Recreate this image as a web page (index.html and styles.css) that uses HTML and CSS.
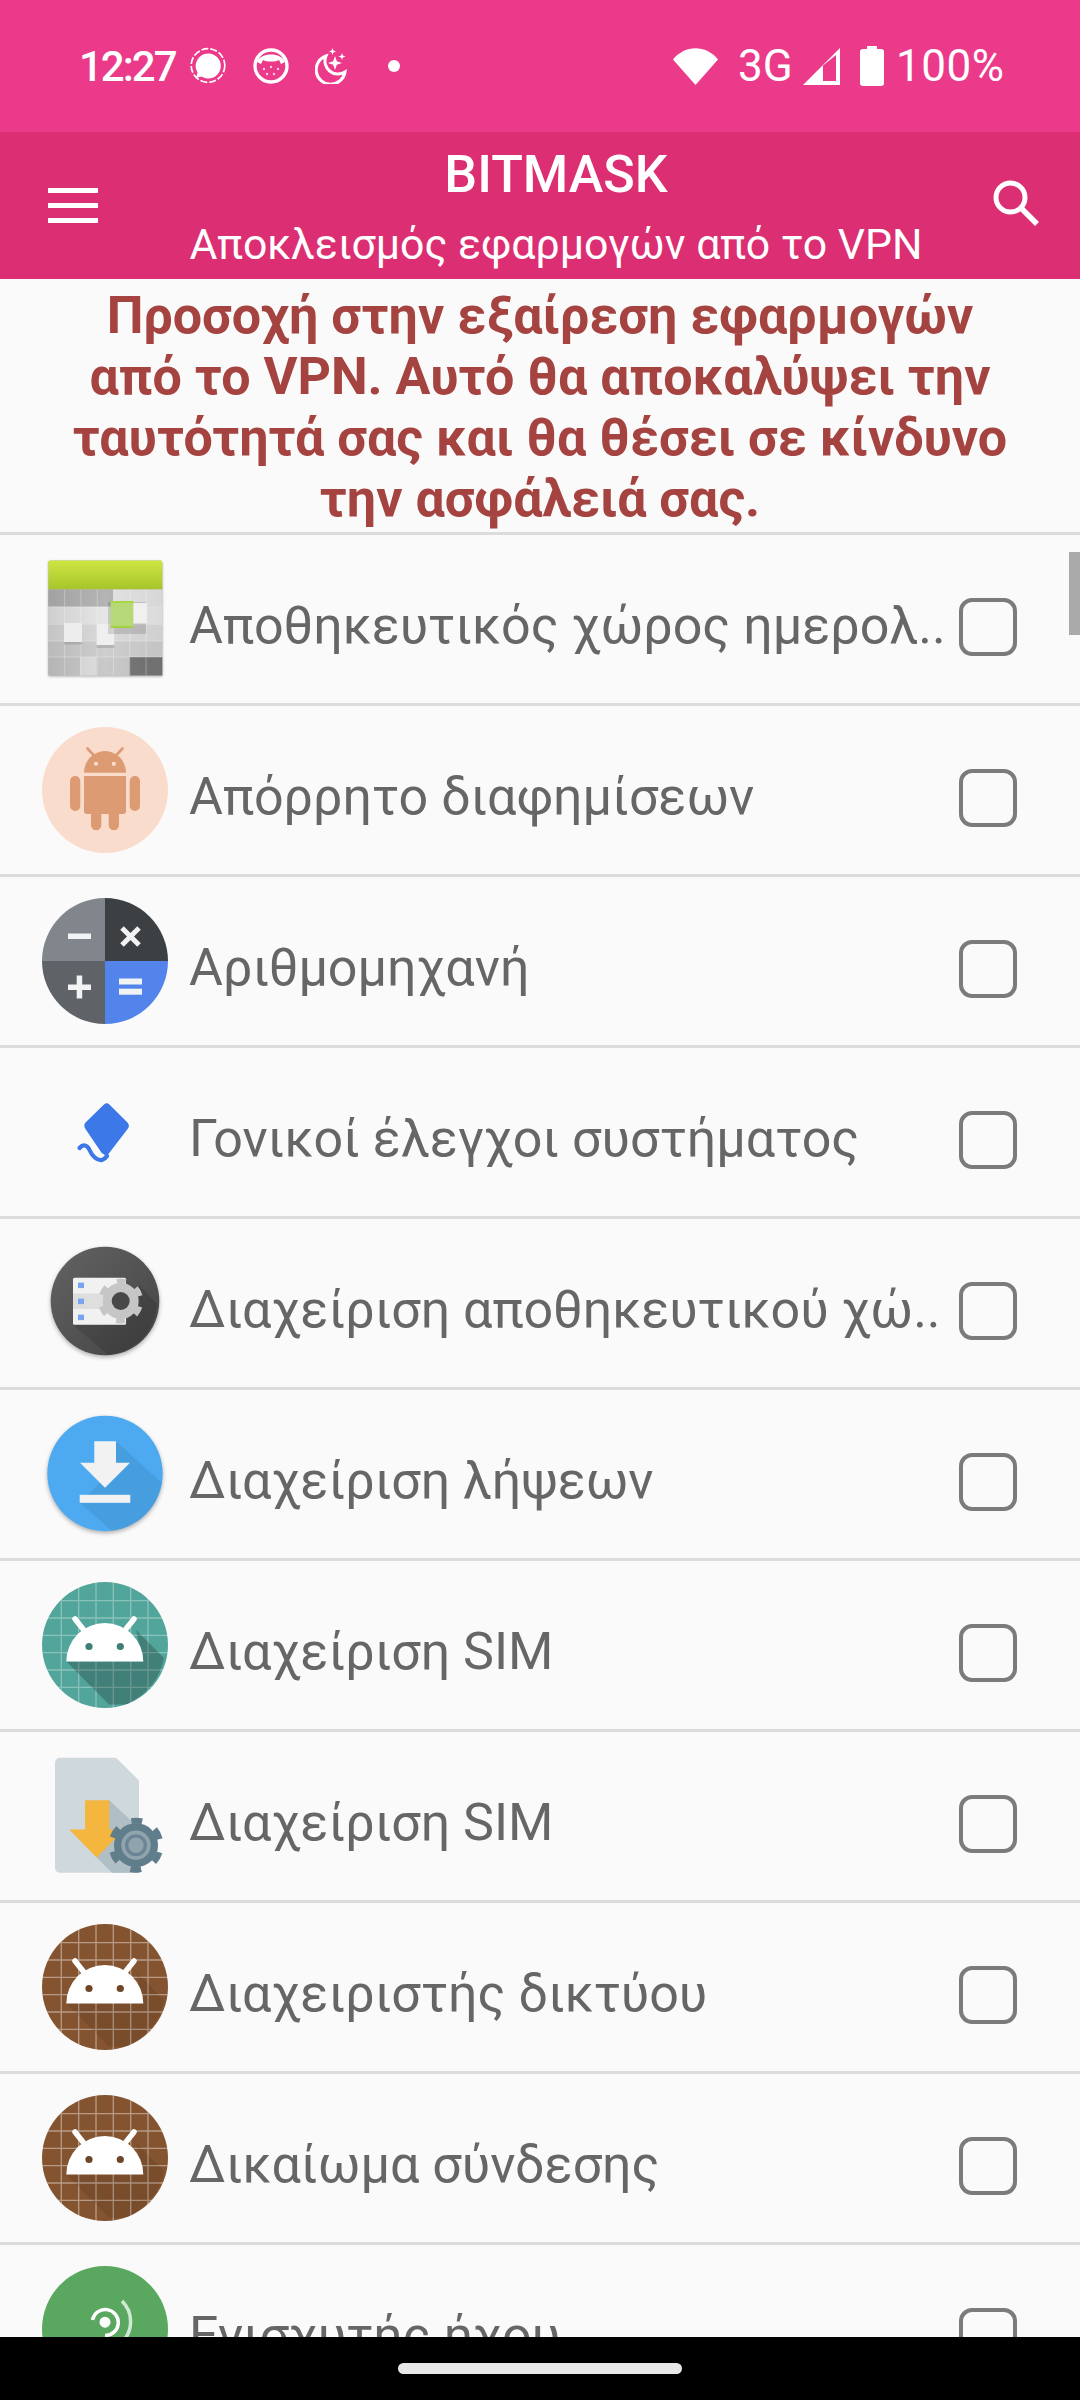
FILE: index.html
```html
<!DOCTYPE html>
<html lang="el">
<head>
    <meta charset="UTF-8">
    <meta name="viewport" content="width=device-width, initial-scale=1.0">
    <title>Bitmask</title>
    <link rel="stylesheet" href="styles.css">
</head>
<body>

<svg class="defs" width="0" height="0">
    <symbol id="droid" viewBox="0 0 126 126">
        <path class="droid-shade" d="M24.3 79.5H101.3L94 48L122 76A63 63 0 0 1 84 122.5H67Z" fill="#000"/>
        <path d="M24.3 79.5A38.5 38.5 0 0 1 101.3 79.5Z" fill="#fff"/>
        <path d="M33 37L41 47M92 37L84 47" stroke="#fff" stroke-width="5.5" stroke-linecap="round"/>
        <circle cx="47" cy="64.5" r="3.6" fill="currentColor"/>
        <circle cx="78.3" cy="64.5" r="3.6" fill="currentColor"/>
    </symbol>
    <symbol id="grid" viewBox="0 0 126 126">
        <path class="grid-lines" d="M19.3 0V126M36.7 0V126M54 0V126M71.3 0V126M88.7 0V126M106 0V126M0 18.7H126M0 36H126M0 53.3H126M0 70.7H126M0 88H126M0 105.3H126" stroke="#fff" stroke-width="1.3"/>
    </symbol>
</svg>

<div class="page">
    <div class="statusbar">
        <span class="clock">12:27</span>
        <svg class="st-signal" viewBox="0 0 36 38">
            <circle cx="18" cy="18.5" r="16.8" fill="none" stroke="#fff" stroke-width="1.7" stroke-dasharray="7 2"/>
            <path d="M18 6.5A12.5 12.5 0 1 1 11.5 29.5L6 31L7.5 25.5A12.5 12.5 0 0 1 18 6.5Z" fill="#fff"/>
        </svg>
        <svg class="st-cat" viewBox="0 0 36 36">
            <circle cx="18" cy="18" r="16" fill="none" stroke="#fff" stroke-width="3.4"/>
            <path d="M4 14C7 4 29 4 32 14L28 16L26 12C22 14 14 14 10 12L8 16Z" fill="#fff"/>
            <g fill="#fff" opacity="0.75">
                <circle cx="11" cy="21" r="1.2"/><circle cx="18" cy="19" r="1.2"/><circle cx="25" cy="21" r="1.2"/>
                <circle cx="14" cy="26" r="1.2"/><circle cx="21" cy="26" r="1.2"/>
            </g>
        </svg>
        <svg class="st-moon" viewBox="0 0 32 36">
            <path d="M11 8A14.5 14.5 0 1 0 30 24A13 13 0 0 1 11 8Z" fill="none" stroke="#fff" stroke-width="3"/>
            <path d="M20 8L21.8 13.2L27 15L21.8 16.8L20 22L18.2 16.8L13 15L18.2 13.2Z" fill="#fff"/>
            <path d="M17.5 0L18.4 2.6L21 3.5L18.4 4.4L17.5 7L16.6 4.4L14 3.5L16.6 2.6Z" fill="#fff"/>
            <path d="M27 5L27.9 7.6L30.5 8.5L27.9 9.4L27 12L26.1 9.4L23.5 8.5L26.1 7.6Z" fill="#fff"/>
        </svg>
        <span class="st-dot"></span>
        <svg class="st-wifi" viewBox="0 0 45 37">
            <path d="M0 11.5C12 -3.5 33 -3.5 45 11.5L22.5 37Z" fill="#fff"/>
        </svg>
        <span class="st-net">3G</span>
        <svg class="st-bars" viewBox="0 0 37 37">
            <path d="M0 37L37 0V37Z" fill="#fff"/>
            <path d="M20 17.5V33H33V7Z" fill="#ec3a8a"/>
        </svg>
        <svg class="st-batt" viewBox="0 0 24 40">
            <path d="M7 0H17V3H21A3 3 0 0 1 24 6V37A3 3 0 0 1 21 40H3A3 3 0 0 1 0 37V6A3 3 0 0 1 3 3H7Z" fill="#fff"/>
        </svg>
        <span class="st-level">100%</span>
    </div>

    <div class="appbar">
        <div class="menu"><span></span><span></span><span></span></div>
        <div class="titles">
            <div class="title">BITMASK</div>
            <div class="subtitle">Αποκλεισμός εφαρμογών από το VPN</div>
        </div>
        <svg class="search" viewBox="0 0 48 48">
            <circle cx="18.5" cy="18.5" r="14.5" fill="none" stroke="#fff" stroke-width="5"/>
            <path d="M29 29L45 45" stroke="#fff" stroke-width="5.5"/>
        </svg>
    </div>

    <div class="content">
        <div class="notice">Προσοχή στην εξαίρεση εφαρμογών<br>από το VPN. Αυτό θα αποκαλύψει την<br>ταυτότητά σας και θα θέσει σε κίνδυνο<br>την ασφάλειά σας.</div>
        <div class="scrollthumb"></div>

        <div class="row">
            <svg class="icon icon-soft" viewBox="0 0 126 126">
                <defs>
                    <linearGradient id="calTop" x1="0" y1="0" x2="0" y2="1"><stop offset="0" stop-color="#cfe542"/><stop offset="1" stop-color="#a6c52b"/></linearGradient>
                    <linearGradient id="calShade" x1="0" y1="0" x2="1" y2="0"><stop offset="0" stop-color="#000" stop-opacity="0.1"/><stop offset="0.5" stop-color="#000" stop-opacity="0"/><stop offset="1" stop-color="#000" stop-opacity="0.05"/></linearGradient>
                </defs>
                <rect x="6.3" y="4.5" width="114" height="115" rx="2" fill="#bdbdbd"/>
                <path d="M6.3 6.5a2 2 0 0 1 2-2H118.3a2 2 0 0 1 2 2V33.5H6.3Z" fill="url(#calTop)"/>
                <rect x="6.3" y="33.5" width="65" height="17.3" fill="#b4b4b4"/>
                <rect x="71.3" y="33.5" width="49" height="17.3" fill="#e2e2e2"/>
                <rect x="6.3" y="50.8" width="114" height="17.7" fill="#e6e6e6"/>
                <rect x="6.3" y="68.5" width="114" height="16.5" fill="#dadada"/>
                <rect x="6.3" y="85" width="114" height="16" fill="#cecece"/>
                <rect x="6.3" y="101" width="114" height="18.5" fill="#c9c9c9"/>
                <rect x="38" y="101" width="16.5" height="18.5" fill="#dedede"/>
                <rect x="87.5" y="101" width="32.8" height="18.5" fill="#767676"/>
                <rect x="6.3" y="33.5" width="114" height="86" fill="url(#calShade)"/>
                <path d="M22.6 33.5V119.5M38.9 33.5V119.5M55.2 33.5V119.5M71.5 33.5V119.5M87.8 33.5V119.5M104.1 33.5V119.5M6.3 50.8H120.3M6.3 68.5H120.3M6.3 85H120.3M6.3 101H120.3" stroke="#fff" stroke-width="0.8" opacity="0.35"/>
                <rect x="22" y="68.5" width="18" height="20" fill="#000" opacity="0.12"/>
                <rect x="22" y="67" width="18" height="19" fill="#ededed"/>
                <rect x="54.5" y="69" width="18" height="23" fill="#000" opacity="0.12"/>
                <rect x="54.5" y="68" width="18" height="21" fill="#efefef"/>
                <rect x="66" y="46" width="38" height="32" fill="#000" opacity="0.13"/>
                <rect x="91" y="47" width="14" height="20.5" fill="#f0f0f0"/>
                <rect x="68.7" y="45" width="22.7" height="27" rx="1" fill="#b6d877"/>
                <rect x="68.7" y="45" width="22.7" height="2" fill="#a9d645"/>
                <rect x="68.7" y="70" width="22.7" height="2" fill="#a2d23f"/>
            </svg>
            <div class="name">Αποθηκευτικός χώρος ημερολ..</div>
            <span class="check"></span>
        </div>

        <div class="row">
            <svg class="icon" viewBox="0 0 126 126">
                <circle cx="63" cy="63" r="63" fill="#fadccd"/>
                <g fill="#dc9b72">
                    <path d="M42 45.7A21 21.7 0 0 1 84 45.7Z"/>
                    <path d="M42 49H84V84A3 3 0 0 1 81 87H45A3 3 0 0 1 42 84Z"/>
                    <rect x="28" y="49" width="10.3" height="35" rx="5.1"/>
                    <rect x="87.7" y="49" width="10.3" height="35" rx="5.1"/>
                    <path d="M49 87H59.3V98A5.1 5.1 0 0 1 49 98Z"/>
                    <path d="M66.7 87H77V98A5.1 5.1 0 0 1 66.7 98Z"/>
                </g>
                <path d="M45.5 21.5L52 28.5M80.5 21.5L74 28.5" stroke="#dc9b72" stroke-width="2.6" stroke-linecap="round"/>
                <rect x="52.2" y="35" width="3.6" height="3.6" fill="#fadccd"/>
                <rect x="70" y="35" width="3.6" height="3.6" fill="#fadccd"/>
            </svg>
            <div class="name">Απόρρητο διαφημίσεων</div>
            <span class="check"></span>
        </div>

        <div class="row">
            <svg class="icon" viewBox="0 0 126 126">
                <path d="M63 63V0A63 63 0 0 0 0 63Z" fill="#80868b"/>
                <path d="M63 63V0A63 63 0 0 1 126 63Z" fill="#3c4043"/>
                <path d="M63 63H0A63 63 0 0 0 63 126Z" fill="#5f6368"/>
                <path d="M63 63H126A63 63 0 0 1 63 126Z" fill="#5384ec"/>
                <g fill="#f1f3f4">
                    <rect x="26" y="35.5" width="23" height="5.5"/>
                    <rect x="26" y="86.5" width="23" height="5.5"/>
                    <rect x="34.7" y="77.5" width="5.5" height="23"/>
                    <rect x="77" y="80.5" width="23" height="6"/>
                    <rect x="77" y="90.7" width="23" height="6"/>
                </g>
                <path d="M80 30L97 47M97 30L80 47" stroke="#f1f3f4" stroke-width="5"/>
            </svg>
            <div class="name">Αριθμομηχανή</div>
            <span class="check"></span>
        </div>

        <div class="row">
            <svg class="icon" viewBox="0 0 126 126">
                <path d="M62 35.5Q64.7 32.8 67.4 35.5L85.5 53.5Q88 56.5 86 59.5L64.7 87.2L59.7 84L43.5 60Q41 56.5 43.5 53.5Z" fill="#3c78e8"/>
                <path d="M37.5 79C41 75 45 76 47 80C50 87 55 92 60 91Q63 90 65 87" fill="none" stroke="#3c78e8" stroke-width="4.2" stroke-linecap="round"/>
            </svg>
            <div class="name">Γονικοί έλεγχοι συστήματος</div>
            <span class="check"></span>
        </div>

        <div class="row">
            <svg class="icon icon-shadow" viewBox="0 0 126 126">
                <defs>
                    <linearGradient id="storeBg" x1="0" y1="0" x2="1" y2="1"><stop offset="0" stop-color="#636363"/><stop offset="1" stop-color="#434343"/></linearGradient>
                </defs>
                <circle cx="63" cy="61" r="54.3" fill="url(#storeBg)"/>
                <path d="M31 84.7H84L97 45L115 64A54.3 54.3 0 0 1 66 115Z" fill="#000" opacity="0.12"/>
                <rect x="31" y="37.8" width="53" height="46.9" rx="1.5" fill="#f1f1f1"/>
                <rect x="31" y="53.5" width="40" height="15.5" fill="#dedede"/>
                <g fill="#7aa3f2">
                    <rect x="36" y="42.6" width="6" height="5.5"/>
                    <rect x="36" y="58.6" width="6" height="5.5"/>
                    <rect x="36" y="74.6" width="6" height="5.5"/>
                </g>
                <circle cx="78.7" cy="61" r="18" fill="#c6c6c6"/>
                <circle cx="78.7" cy="61" r="20" fill="none" stroke="#c6c6c6" stroke-width="5" stroke-dasharray="9 11.94" stroke-dashoffset="-5.97"/>
                <circle cx="78.7" cy="61" r="9" fill="#484848"/>
            </svg>
            <div class="name">Διαχείριση αποθηκευτικού χώ..</div>
            <span class="check"></span>
        </div>

        <div class="row">
            <svg class="icon icon-shadow" viewBox="0 0 126 126">
                <circle cx="63" cy="62.5" r="57.7" fill="#4daaf0"/>
                <path d="M74 30.2L120 72A57.7 57.7 0 0 1 70 120L37.7 91.8L60 70L52 52H74Z" fill="#000" opacity="0.07"/>
                <g fill="#f2f2f2">
                    <path d="M52.3 30.2H74V51.8H88L63 76.8L38 51.8H52.3Z"/>
                    <rect x="37.7" y="83.8" width="50.6" height="8"/>
                </g>
            </svg>
            <div class="name">Διαχείριση λήψεων</div>
            <span class="check"></span>
        </div>

        <div class="row droid-teal">
            <svg class="icon" viewBox="0 0 126 126">
                <clipPath id="roundA"><circle cx="63" cy="63" r="63"/></clipPath>
                <circle cx="63" cy="63" r="63" fill="#52a59a"/>
                <g clip-path="url(#roundA)">
                    <use href="#grid" width="126" height="126"/>
                    <use href="#droid" width="126" height="126"/>
                </g>
            </svg>
            <div class="name">Διαχείριση SIM</div>
            <span class="check"></span>
        </div>

        <div class="row">
            <svg class="icon" viewBox="0 0 126 126">
                <path d="M18 4.8H74L97 27.5V119.8H18A5 5 0 0 1 13 114.8V9.8A5 5 0 0 1 18 4.8Z" fill="#cfd8dc"/>
                <path d="M67.3 47.2L97 75V119.8H70L54.7 104.8Z" fill="#b0bec5"/>
                <path d="M43 47.2H67.3V76.5H82L54.7 104.8L27.3 76.5H43Z" fill="#f4b63f"/>
                <circle cx="94" cy="92.2" r="22" fill="#607d8b"/>
                <circle cx="94" cy="92.2" r="24.5" fill="none" stroke="#607d8b" stroke-width="6" stroke-dasharray="11 14.66" stroke-dashoffset="-7.33"/>
                <circle cx="94" cy="92.2" r="14.7" fill="#90a4ae"/>
                <circle cx="94" cy="92.2" r="11" fill="#6b8596"/>
                <circle cx="94" cy="92.2" r="7.7" fill="#90a4ae"/>
            </svg>
            <div class="name">Διαχείριση SIM</div>
            <span class="check"></span>
        </div>

        <div class="row droid-brown">
            <svg class="icon" viewBox="0 0 126 126">
                <clipPath id="roundB"><circle cx="63" cy="63" r="63"/></clipPath>
                <circle cx="63" cy="63" r="63" fill="#845330"/>
                <g clip-path="url(#roundB)">
                    <use href="#grid" width="126" height="126"/>
                    <use href="#droid" width="126" height="126"/>
                </g>
            </svg>
            <div class="name">Διαχειριστής δικτύου</div>
            <span class="check"></span>
        </div>

        <div class="row droid-brown">
            <svg class="icon" viewBox="0 0 126 126">
                <clipPath id="roundC"><circle cx="63" cy="63" r="63"/></clipPath>
                <circle cx="63" cy="63" r="63" fill="#845330"/>
                <g clip-path="url(#roundC)">
                    <use href="#grid" width="126" height="126"/>
                    <use href="#droid" width="126" height="126"/>
                </g>
            </svg>
            <div class="name">Δικαίωμα σύνδεσης</div>
            <span class="check"></span>
        </div>

        <div class="row">
            <svg class="icon" viewBox="0 0 126 126">
                <circle cx="63" cy="63" r="63" fill="#5aa860"/>
                <circle cx="63" cy="56.2" r="5.5" fill="#fff"/>
                <path d="M50.5 54A13 13 0 1 1 63 69.5" fill="none" stroke="#fff" stroke-width="3.5"/>
                <path d="M80 35A29 29 0 0 1 78 78" fill="none" stroke="#cfe9d2" stroke-width="3.5"/>
            </svg>
            <div class="name">Ενισχυτής ήχου</div>
            <span class="check"></span>
        </div>
    </div>

    <div class="navbar"><span class="pill"></span></div>
</div>

</body>
</html>
```

FILE: styles.css
```css
* {
    box-sizing: border-box;
}
body {
    margin: 0;
    font-family: Roboto, "Noto Sans", sans-serif;
    background: #000;
}
.defs {
    position: absolute;
}
.page {
    width: 1080px;
    height: 2400px;
    display: flex;
    flex-direction: column;
    overflow: hidden;
}

/* status bar */
.statusbar {
    height: 132px;
    flex: none;
    background: #ec3a8a;
    color: #fff;
    display: flex;
    align-items: center;
    padding-left: 79px;
}
.clock {
    width: 96px;
    font-size: 42px;
    font-weight: 500;
    letter-spacing: -2px;
    white-space: nowrap;
}
.st-signal {
    width: 36px;
    height: 38px;
    margin-left: 15px;
}
.st-cat {
    width: 36px;
    height: 36px;
    margin-left: 27px;
}
.st-moon {
    width: 32px;
    height: 36px;
    margin-left: 26px;
}
.st-dot {
    width: 12px;
    height: 12px;
    border-radius: 50%;
    background: #fff;
    margin-left: 41px;
}
.st-wifi {
    width: 45px;
    height: 37px;
    margin-left: 273px;
}
.st-net {
    width: 50px;
    margin-left: 20px;
    font-size: 44px;
    white-space: nowrap;
}
.st-bars {
    width: 37px;
    height: 37px;
    margin-left: 15px;
}
.st-batt {
    width: 24px;
    height: 40px;
    margin-left: 20px;
}
.st-level {
    margin-left: 12px;
    font-size: 44px;
    letter-spacing: 0.5px;
    white-space: nowrap;
}

/* app bar */
.appbar {
    height: 147px;
    flex: none;
    background: #dc2e72;
    color: #fff;
    display: flex;
    align-items: center;
    padding-left: 48px;
}
.menu {
    width: 50px;
    flex: none;
    display: flex;
    flex-direction: column;
    gap: 10px;
}
.menu span {
    height: 5px;
    background: #fff;
}
.titles {
    width: 916px;
    text-align: center;
    padding-top: 7px;
}
.title {
    font-size: 52px;
    font-weight: 500;
    line-height: 62px;
}
.subtitle {
    font-size: 42.8px;
    line-height: 62px;
    margin-top: 7px;
}
.search {
    width: 48px;
    height: 48px;
    flex: none;
    margin-left: -22px;
    margin-top: -6px;
}

/* list */
.content {
    flex: 1;
    position: relative;
    overflow: hidden;
    background: #fafafa;
}
.notice {
    height: 253px;
    padding-top: 6px;
    text-align: center;
    font-size: 52px;
    font-weight: 700;
    line-height: 61px;
    color: #a44340;
    white-space: nowrap;
}
.scrollthumb {
    position: absolute;
    top: 273px;
    right: 0;
    width: 11px;
    height: 83px;
    background: #aaa;
}
.row {
    height: 171px;
    border-top: 3px solid #dcdcdc;
    display: flex;
    align-items: center;
    padding-left: 42px;
}
.icon {
    width: 126px;
    height: 126px;
    flex: none;
}
.icon-shadow {
    filter: drop-shadow(0 2px 2px rgba(0, 0, 0, 0.3));
}
.icon-soft {
    filter: drop-shadow(0 1px 1px rgba(0, 0, 0, 0.25));
}
.name {
    width: 752px;
    flex: none;
    margin-left: 21px;
    margin-top: 12px;
    font-size: 52px;
    color: #666;
    white-space: nowrap;
}
.check {
    width: 58px;
    height: 58px;
    flex: none;
    margin-left: 18px;
    margin-top: 15px;
    border: 4px solid #7b7b7b;
    border-radius: 13px;
}
.droid-shade {
    opacity: var(--shade);
}
.grid-lines {
    opacity: var(--grid);
}
.droid-teal {
    color: #3f7f75;
    --shade: 0.22;
    --grid: 0.32;
}
.droid-brown {
    color: #6e4526;
    --shade: 0.08;
    --grid: 0.42;
}

/* nav bar */
.navbar {
    height: 63px;
    flex: none;
    background: #000;
    display: flex;
    justify-content: center;
    padding-top: 26px;
}
.pill {
    width: 284px;
    height: 11px;
    border-radius: 6px;
    background: #e8e8e8;
}
```
